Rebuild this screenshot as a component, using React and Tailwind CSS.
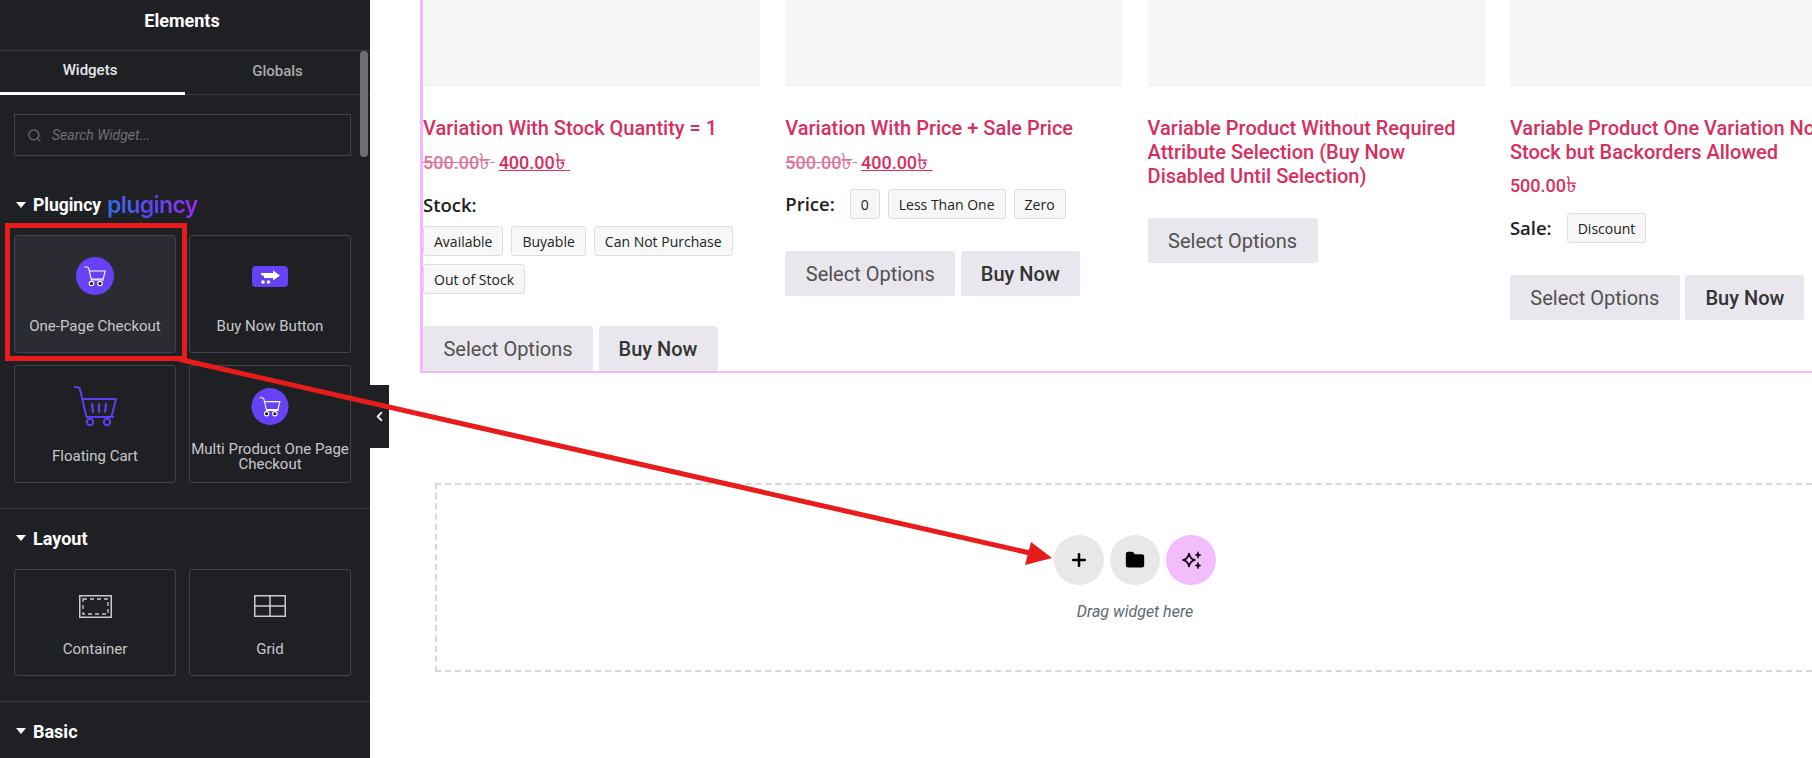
import React from "react";
import { Search, ChevronLeft, Plus, Folder } from "lucide-react";

const roboto = "font-['Roboto',sans-serif]";

function Caret() {
  return (
    <svg width="10" height="6" viewBox="0 0 10 6" className="mr-[7px] shrink-0">
      <path d="M0 0h10L5 6z" fill="#fff" />
    </svg>
  );
}

function CircleCart({ small }) {
  return (
    <svg width="38" height={small ? 37 : 38} viewBox="0 0 38 38">
      <circle cx="19" cy="19" r="19" fill="#6741f5" />
      <path
        d="M8.500 10h2.500c1 0 1.500.6 1.800 1.600l2.600 11.400h12.400"
        fill="none"
        stroke="#fff"
        strokeWidth="1.100"
      />
      <path d="M13.400 14h15.800l-2 8H15.200" fill="none" stroke="#fff" strokeWidth="1.100" />
      <circle cx="15.500" cy="26.500" r="2.200" fill="#111" stroke="#fff" strokeWidth="1.200" />
      <circle cx="24" cy="26.500" r="2.200" fill="#111" stroke="#fff" strokeWidth="1.200" />
    </svg>
  );
}

function BuyNowIcon() {
  return (
    <svg width="36" height="21" viewBox="0 0 36 21">
      <rect width="36" height="21" rx="4" fill="#6741f5" />
      <path d="M9 7h12V4.500l7 5-7 5V12H12v-2H10.500V8.800H9z" fill="#fff" />
      <circle cx="11" cy="16" r="1.800" fill="#fff" />
      <circle cx="16.500" cy="16" r="1.800" fill="#fff" />
    </svg>
  );
}

function FloatingCartIcon() {
  return (
    <svg width="43" height="41" viewBox="0 0 43 41" fill="none" stroke="#5f3df0" strokeWidth="2">
      <path d="M0 1h2.500c2 0 3.200 1 3.700 3L12 29c.3 1.500 1 2 2.500 2" />
      <path d="M8 13h34l-4.500 18H12" strokeLinejoin="round" />
      <path d="M12 31h28" />
      <circle cx="16" cy="36" r="3.200" />
      <circle cx="33" cy="36" r="3.200" />
      <path d="M18 18l1 8M25 18v8M32 18l-1 8" strokeWidth="2.200" strokeLinecap="round" />
    </svg>
  );
}

function ContainerIcon() {
  return (
    <svg width="33" height="23" viewBox="0 0 33 23" fill="none" stroke="#c9cbcd">
      <rect x="0.750" y="0.750" width="31.500" height="21.500" strokeWidth="1.500" />
      <rect x="4" y="4" width="25" height="15" strokeWidth="1.300" strokeDasharray="4 3" />
    </svg>
  );
}

function GridIcon() {
  return (
    <svg width="32" height="22" viewBox="0 0 32 22" fill="none" stroke="#c9cbcd" strokeWidth="1.500">
      <rect x="0.750" y="0.750" width="30.500" height="20.500" />
      <path d="M16 1v20M1 11h30" />
    </svg>
  );
}

function Tile({ label, icon, active, h = "h-[118px]", iconBox = "h-[48px] mt-[16px]", labelCls = "mt-[19px]" }) {
  return (
    <div
      className={`${h} flex flex-col items-center rounded-[3px] border border-[#3f444b] ${active ? "bg-[#2b2c31]" : ""}`}
    >
      <div className={`flex items-center justify-center ${iconBox}`}>{icon}</div>
      <div className={`text-center text-[15px] leading-[15px] text-[#c6c8ca] ${labelCls}`}>{label}</div>
    </div>
  );
}

function Heading({ children, cls = "mt-[17px]" }) {
  return (
    <div className={`flex h-[24px] items-center px-[16px] text-[18px] font-bold text-white ${cls}`}>
      <Caret />
      {children}
    </div>
  );
}

function Sidebar() {
  return (
    <aside className={`relative h-full w-[370px] shrink-0 overflow-hidden bg-[#1f2024] ${roboto}`}>
      <div className="flex h-[51px] items-center justify-center border-b border-[#3a3b3f] pb-[10px] pr-[6px] text-[18px] font-bold text-white">
        Elements
      </div>
      <div className="flex h-[44px] border-b border-[#3a3b3f] pr-[10px] text-[15px] font-medium">
        <div className="flex h-[44px] w-[185px] items-center justify-center border-b-[3px] border-white pb-[2px] pr-[5px] text-[#e6e8ea]">
          Widgets
        </div>
        <div className="flex flex-1 items-center justify-center pb-[3px] pl-[10px] text-[#a8abad]">Globals</div>
      </div>
      <div className="absolute right-[2px] top-[51px] h-[106px] w-[8px] rounded-full bg-[#6e6f71]" />

      <div className="px-[14px] pr-[19px] pt-[19px]">
        <div className="flex h-[42px] items-center border border-[#3f444b] px-[12px] text-[14px] italic text-[#6d7175]">
          <Search size={15} strokeWidth={2} className="mr-[10px] text-[#69727d]" />
          Search Widget...
        </div>
      </div>

      <Heading cls="mt-[37px]">
        <span className="text-[17.500px]">Plugincy</span>
        <span className="ml-[6px] bg-gradient-to-r from-[#2f6df0] via-[#5a42f0] to-[#a020f5] bg-clip-text font-['Inter',sans-serif] text-[23px] font-semibold leading-[28px] tracking-[-0.6px] text-transparent">
          plugincy
        </span>
      </Heading>

      <div className="grid grid-cols-[162px_162px] gap-x-[13px] gap-y-[12px] px-[14px] pt-[18px]">
        <Tile active label="One-Page Checkout" icon={<CircleCart />} />
        <Tile label="Buy Now Button" icon={<BuyNowIcon />} />
        <Tile label="Floating Cart" icon={<FloatingCartIcon />} />
        <Tile
          label="Multi Product One Page Checkout"
          icon={<CircleCart small />}
          labelCls="mt-[12px]"
        />
      </div>

      <div className="mt-[25px] border-t border-[#3a3b3f]" />
      <Heading>Layout</Heading>
      <div className="grid grid-cols-[162px_162px] gap-x-[13px] px-[14px] pt-[19px]">
        <Tile h="h-[107px]" iconBox="h-[24px] mt-[24px]" labelCls="mt-[24px]" label="Container" icon={<ContainerIcon />} />
        <Tile h="h-[107px]" iconBox="h-[24px] mt-[24px]" labelCls="mt-[24px]" label="Grid" icon={<GridIcon />} />
      </div>

      <div className="mt-[25px] border-t border-[#3a3b3f]" />
      <Heading>Basic</Heading>
    </aside>
  );
}

function Chip({ children }) {
  return (
    <span className="flex h-[30px] items-center rounded-[3px] border border-[#dddddd] bg-[#f7f7f7] px-[10px] font-['Open_Sans',sans-serif] text-[14px] text-[#222]">
      {children}
    </span>
  );
}

function Buttons({ buyNow = true }) {
  return (
    <div className={`flex gap-[5.500px] ${roboto} text-[20px]`}>
      <div className="flex h-[45px] w-[170px] items-center justify-center rounded-[3px] bg-[#e9e6ed] text-[#515151]">
        Select Options
      </div>
      {buyNow && (
        <div className="flex h-[45px] w-[119px] items-center justify-center rounded-[3px] bg-[#e9e6ed] font-medium text-[#333]">
          Buy Now
        </div>
      )}
    </div>
  );
}

function Product({ title, price, children, buyNow, btnTop }) {
  return (
    <div className="w-[337px] shrink-0">
      <div className="h-[86px] border-b border-[#eef0f0] bg-[#f5f7f7]" />
      <div className={`mt-[30px] ${roboto} text-[20px] font-medium leading-[24px] text-[#d6305f]`}>{title}</div>
      {price}
      {children}
      <div className={btnTop}>
        <Buttons buyNow={buyNow} />
      </div>
    </div>
  );
}

function Taka() {
  return <span className="text-[22px] leading-[20px]">৳</span>;
}

function SalePrice() {
  return (
    <div className={`mt-[12px] flex h-[20px] items-center gap-[4px] ${roboto} text-[18px] font-medium leading-[20px] text-[#d6305f]`}>
      <span className="text-[#e0759a] line-through">
        500.00
        <Taka />
        &nbsp;
      </span>
      <span className="underline">
        400.00
        <Taka />
        &nbsp;
      </span>
    </div>
  );
}

function Label({ children, cls = "" }) {
  return <span className={`font-['Open_Sans',sans-serif] text-[18.500px] font-semibold text-[#222] ${cls}`}>{children}</span>;
}

function Products() {
  return (
    <div className="ml-[50px] flex h-[373px] gap-[25.300px] overflow-hidden border-b-2 border-l-[3px] border-[#f2b8fb]">
      <Product title="Variation With Stock Quantity = 1" price={<SalePrice />} btnTop="mt-[32px]">
        <div className="mt-[19px] flex h-[28px] items-center">
          <Label>Stock:</Label>
        </div>
        <div className="mt-[7px] flex flex-wrap gap-x-[8px] gap-y-[8px]">
          <Chip>Available</Chip>
          <Chip>Buyable</Chip>
          <Chip>Can Not Purchase</Chip>
          <Chip>Out of Stock</Chip>
        </div>
      </Product>

      <Product title="Variation With Price + Sale Price" price={<SalePrice />} btnTop="mt-[32px]">
        <div className="mt-[17px] flex items-center gap-[8px]">
          <Label cls="mr-[7px]">Price:</Label>
          <Chip>0</Chip>
          <Chip>Less Than One</Chip>
          <Chip>Zero</Chip>
        </div>
      </Product>

      <Product
        title="Variable Product Without Required Attribute Selection (Buy Now Disabled Until Selection)"
        buyNow={false}
        btnTop="mt-[30px]"
      />

      <Product
        title={
          <span className="block w-[340px]">
            Variable Product One Variation No
            <br />
            Stock but Backorders Allowed
          </span>
        }
        price={
          <div className={`mt-[11px] h-[22px] ${roboto} text-[18px] font-medium leading-[22px] text-[#d6305f]`}>
            500.00
            <Taka />
          </div>
        }
        btnTop="mt-[32px]"
      >
        <div className="mt-[16px] flex items-center">
          <Label cls="mr-[15px]">Sale:</Label>
          <Chip>Discount</Chip>
        </div>
      </Product>
    </div>
  );
}

function DropZone() {
  return (
    <div className="ml-[65px] mt-[110px] flex h-[189px] flex-col items-center border-2 border-r-0 border-dashed border-[#d5d8dc] pt-[50px]">
      <div className="ml-[21px] flex gap-[6px]">
        <div className="flex h-[50px] w-[50px] items-center justify-center rounded-full bg-[#e6e8ea] text-black">
          <Plus size={20} strokeWidth={3} />
        </div>
        <div className="flex h-[50px] w-[50px] items-center justify-center rounded-full bg-[#e6e8ea] text-black">
          <Folder size={20} fill="#000" strokeWidth={2} />
        </div>
        <div className="flex h-[50px] w-[50px] items-center justify-center rounded-full bg-[#f2bcfd]">
          <svg width="20" height="20" viewBox="0 0 20 20" fill="none" stroke="#000">
            <path d="M8 3.500Q9 9 14 10Q9 11 8 16.500Q7 11 2 10Q7 9 8 3.500z" strokeWidth="1.600" strokeLinejoin="round" />
            <path d="M17 1.500l.9 2.600 2.100.9-2.100.9-.9 2.600-.9-2.600-2.100-.9 2.100-.9zM17 12l.9 2.600 2.100.9-2.100.9-.9 2.600-.9-2.600-2.100-.9 2.100-.9z" fill="#000" strokeWidth="0.400" />
          </svg>
        </div>
      </div>
      <div className={`ml-[21px] mt-[18px] ${roboto} text-[16px] italic leading-[18px] text-[#5f6770]`}>Drag widget here</div>
    </div>
  );
}

function Annotation() {
  // red box and arrow drawn on top of the screenshot
  return (
    <svg width="1812" height="758" className="pointer-events-none absolute left-0 top-0">
      <rect x="7.500" y="225.500" width="177" height="133" fill="none" stroke="#e91c1c" strokeWidth="5" />
      <path d="M178 359L1030 553" stroke="#e91c1c" strokeWidth="5" />
      <path d="M1052 558L1031 542L1025 565z" fill="#e91c1c" />
    </svg>
  );
}

export default function App() {
  return (
    <div className="relative flex h-[758px] w-[1812px] overflow-hidden bg-white">
      <Sidebar />
      <main className="min-w-0 flex-1">
        <Products />
        <DropZone />
      </main>
      <div className="absolute left-[370px] top-[385px] flex h-[63px] w-[19px] items-center justify-center bg-[#1f2024] text-[#e6e8ea]">
        <ChevronLeft size={15} strokeWidth={3} />
      </div>
      <Annotation />
    </div>
  );
}
